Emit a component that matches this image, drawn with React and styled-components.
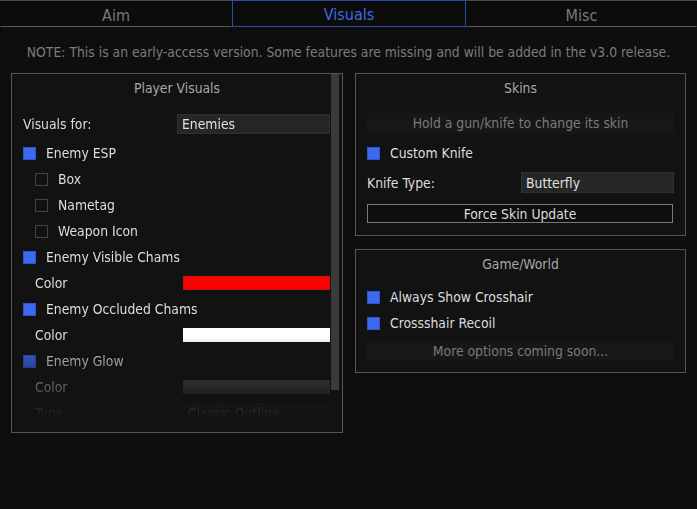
import React from 'react';
import styled, { createGlobalStyle } from 'styled-components';

const GlobalStyle = createGlobalStyle`
  html, body {
    margin: 0;
    padding: 0;
    background: #0e0e0e;
  }
  body {
    font-family: "DejaVu Sans Condensed", "Noto Sans", sans-serif;
    font-size: 13.8px;
    color: #dddddd;
  }
`;

const Page = styled.div`
  width: 697px;
  height: 509px;
  background: #0e0e0e;
  overflow: hidden;
`;

const TabBar = styled.div`
  display: grid;
  grid-template-columns: 232px 234px 1fr;
  height: 27px;
  border-top: 1px solid #4a4a4a;
  box-sizing: border-box;
`;

const Tab = styled.div`
  display: flex;
  align-items: center;
  justify-content: center;
  font-size: 16px;
  background: #0c0c0c;
  color: ${({ active }) => (active ? '#3f6ae6' : '#7a7a7a')};
  border-bottom: 1px solid ${({ active }) => (active ? '#2b4ca8' : '#5a5a5a')};
  border-left: 1px solid ${({ active }) => (active ? '#2b4ca8' : 'transparent')};
  border-right: 1px solid ${({ active }) => (active ? '#2b4ca8' : 'transparent')};
  box-shadow: ${({ active }) => (active ? 'inset 0 1px 0 #2b4ca8' : 'none')};
  margin-top: ${({ active }) => (active ? '-1px' : '0')};
  padding-top: 3px;
`;

const Note = styled.div`
  height: 46px;
  padding-top: 4px;
  box-sizing: border-box;
  display: flex;
  align-items: center;
  justify-content: center;
  color: #7c7c7c;
`;

const Columns = styled.div`
  display: grid;
  grid-template-columns: 332px 331px;
  column-gap: 12px;
  padding: 0 11px;
  align-items: start;
`;

const Stack = styled.div`
  display: flex;
  flex-direction: column;
  gap: 13px;
`;

const Panel = styled.div`
  position: relative;
  border: 1px solid #555555;
  background: #121212;
  height: ${({ h }) => h}px;
  box-sizing: border-box;
  overflow: hidden;
`;

const Title = styled.div`
  height: 29px;
  line-height: 29px;
  text-align: center;
  color: #a8a8a8;
`;

const Body = styled.div`
  display: flex;
  flex-direction: column;
  padding: ${({ pad }) => pad || '8px 12px 0 11px'};
`;

const FadeBody = styled(Body)`
  height: 329px;
  box-sizing: border-box;
  overflow: hidden;
  padding-right: 12px;
  -webkit-mask-image: linear-gradient(to bottom, #000 0%, #000 71%, rgba(0,0,0,0.38) 86%, transparent 96%);
  mask-image: linear-gradient(to bottom, #000 0%, #000 71%, rgba(0,0,0,0.38) 86%, transparent 96%);
`;

const Scrollbar = styled.div`
  position: absolute;
  top: 0;
  right: 3px;
  width: 8px;
  height: 316px;
  background: #3a3a3a;
`;

const Row = styled.div`
  display: flex;
  align-items: center;
  height: ${({ h }) => h || 26}px;
  margin-bottom: ${({ mb }) => mb || 0}px;
  padding-left: ${({ indent }) => (indent ? 12 : 0)}px;
  color: #dddddd;
`;

const Label = styled.span`
  width: ${({ w }) => (w ? `${w}px` : 'auto')};
  flex-shrink: 0;
`;

const Check = styled.span`
  width: 13px;
  height: 13px;
  box-sizing: border-box;
  margin-right: 10px;
  flex-shrink: 0;
  background: ${({ on }) => (on ? '#3d68f0' : '#111111')};
  border: 1px solid ${({ on }) => (on ? '#2f55cc' : '#444444')};
`;

const Select = styled.div`
  flex: 1;
  height: ${({ h }) => h || 20}px;
  box-sizing: border-box;
  background: #262626;
  border: 1px solid #303030;
  display: flex;
  align-items: center;
  padding-left: 4px;
  margin-left: ${({ ml }) => ml || 0}px;
  color: #e0e0e0;
`;

const Swatch = styled.div`
  flex: 1;
  height: 14px;
  margin-left: 6px;
  box-sizing: border-box;
  background: ${({ color }) => color};
  border: 1px solid ${({ edge }) => edge};
`;

const InfoBox = styled.div`
  height: 20px;
  background: #171717;
  display: flex;
  align-items: center;
  justify-content: center;
  color: #7a7a7a;
  margin: ${({ m }) => m || '0'};
`;

const Button = styled.div`
  height: 19px;
  box-sizing: border-box;
  border: 1px solid #7a7a7a;
  background: #0e0e0e;
  display: flex;
  align-items: center;
  justify-content: center;
  color: #dddddd;
  margin-top: 8px;
  margin-right: 1px;
`;

const CheckRow = ({ on, label, indent }) => (
  <Row indent={indent}>
    <Check on={on} />
    <span>{label}</span>
  </Row>
);

export default function App() {
  return (
    <Page>
      <GlobalStyle />
      <TabBar>
        <Tab>Aim</Tab>
        <Tab active>Visuals</Tab>
        <Tab>Misc</Tab>
      </TabBar>
      <Note>NOTE: This is an early-access version. Some features are missing and will be added in the v3.0 release.</Note>
      <Columns>
        <Panel h={360}>
          <Title>Player Visuals</Title>
          <Scrollbar />
          <FadeBody>
            <Row mb={3}>
              <Label w={154}>Visuals for:</Label>
              <Select>Enemies</Select>
            </Row>
            <CheckRow on label="Enemy ESP" />
            <CheckRow indent label="Box" />
            <CheckRow indent label="Nametag" />
            <CheckRow indent label="Weapon Icon" />
            <CheckRow on label="Enemy Visible Chams" />
            <Row indent>
              <Label w={142}>Color</Label>
              <Swatch color="#ff0000" edge="#c81010" />
            </Row>
            <CheckRow on label="Enemy Occluded Chams" />
            <Row indent>
              <Label w={142}>Color</Label>
              <Swatch color="#ffffff" edge="#ffffff" />
            </Row>
            <CheckRow on label="Enemy Glow" />
            <Row indent>
              <Label w={142}>Color</Label>
              <Swatch color="linear-gradient(#5a5a5a, #444444)" edge="#4a4a4a" />
            </Row>
            <Row indent>
              <Label w={142}>Type:</Label>
              <Select ml={6}>Classic Outline</Select>
            </Row>
          </FadeBody>
        </Panel>
        <Stack>
          <Panel h={163}>
            <Title>Skins</Title>
            <Body pad="10px 11px 0 11px">
              <InfoBox>Hold a gun/knife to change its skin</InfoBox>
              <Row h={26} mb={3} style={{ marginTop: 7 }}>
                <Check on />
                <span>Custom Knife</span>
              </Row>
              <Row h={27}>
                <Label w={154}>Knife Type:</Label>
                <Select h={21}>Butterfly</Select>
              </Row>
              <Button>Force Skin Update</Button>
            </Body>
          </Panel>
          <Panel h={124}>
            <Title>Game/World</Title>
            <Body pad="5px 11px 0 11px">
              <CheckRow on label="Always Show Crosshair" />
              <CheckRow on label="Crossshair Recoil" />
              <InfoBox m="5px 0 0 0">More options coming soon...</InfoBox>
            </Body>
          </Panel>
        </Stack>
      </Columns>
    </Page>
  );
}
